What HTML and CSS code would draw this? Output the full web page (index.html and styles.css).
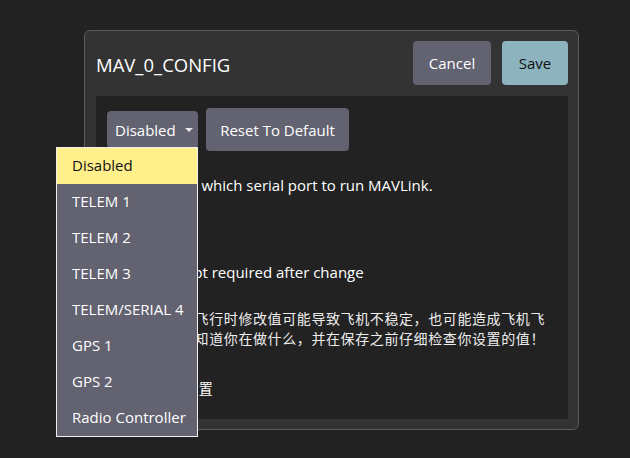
FILE: index.html
```html
<!DOCTYPE html>
<html>
<head>
<meta charset="utf-8">
<link rel="stylesheet" href="styles.css">
</head>
<body>
<div class="dialog">
  <div class="header">
    <div class="title">MAV_0_CONFIG</div>
    <button class="btn cancel">Cancel</button>
    <button class="btn save">Save</button>
  </div>
  <div class="content">
    <div class="row">
      <div class="combo"><span>Disabled</span><span class="arrow"></span></div>
      <button class="btn reset">Reset To Default</button>
    </div>
    <p class="line desc">Configure on which serial port to run MAVLink.</p>
    <p class="line reboot">Vehicle reboot required after change</p>
    <p class="line warn">警告：如果在飞行时修改值可能导致飞机不稳定，也可能造成飞机飞<br>飞丢。确保你知道你在做什么，并在保存之前仔细检查你设置的值！</p>
    <p class="line adv"><span class="check"></span>高级设置</p>
    <div class="menu">
      <div class="item active">Disabled</div>
      <div class="item">TELEM 1</div>
      <div class="item">TELEM 2</div>
      <div class="item">TELEM 3</div>
      <div class="item">TELEM/SERIAL 4</div>
      <div class="item">GPS 1</div>
      <div class="item">GPS 2</div>
      <div class="item">Radio Controller</div>
    </div>
  </div>
</div>
</body>
</html>
```
FILE: styles.css
```css
html, body {
  margin: 0;
  padding: 0;
  background: #222222;
  font-family: "Open Sans", "Noto Sans CJK SC", sans-serif;
  color: #ffffff;
}
body {
  width: 630px;
  height: 458px;
  overflow: hidden;
  padding-top: 30px;
  box-sizing: border-box;
}
.dialog {
  margin-left: 84px;
  width: 495px;
  height: 400px;
  box-sizing: border-box;
  border: 1px solid #5c5c5c;
  border-radius: 6px;
  background: #333333;
  padding: 10px 10px 10px 11px;
  display: flex;
  flex-direction: column;
  gap: 11px;
}
.header {
  display: flex;
  align-items: center;
  gap: 11px;
  height: 44px;
  flex: none;
}
.title {
  flex: 1;
  font-size: 18.5px;
  padding-top: 2px;
}
.btn {
  font-family: "Open Sans", sans-serif;
  border: none;
  border-radius: 4px;
  color: #ffffff;
  font-size: 15px;
  padding: 0;
  cursor: pointer;
}
.cancel {
  width: 78px;
  height: 44px;
  background: #626270;
}
.save {
  width: 66px;
  height: 44px;
  background: #8cb3be;
  color: #111111;
}
.content {
  flex: 1;
  background: #222222;
  position: relative;
  padding: 12px 11px;
}
.row {
  display: flex;
  align-items: center;
  gap: 8px;
}
.combo {
  width: 91px;
  height: 37px;
  box-sizing: border-box;
  background: #626270;
  border-radius: 4px;
  display: flex;
  align-items: center;
  padding-left: 8px;
  font-size: 15px;
  gap: 9px;
}
.arrow {
  width: 0;
  height: 0;
  border-left: 4px solid transparent;
  border-right: 4px solid transparent;
  border-top: 4px solid #e8e8e8;
}
.reset {
  width: 143px;
  height: 43px;
  background: #626270;
}
.line {
  margin: 0;
  font-size: 15px;
  line-height: 20px;
}
.desc { margin-top: 24px; }
.reboot { margin-top: 67px; }
.warn {
  margin-top: 26px;
  font-family: "Noto Sans CJK SC", sans-serif;
  font-size: 14px;
  letter-spacing: 0.6px;
  color: #eeeeee;
}
.adv {
  margin-top: 30px;
  font-family: "Noto Sans CJK SC", sans-serif;
  font-size: 14px;
  letter-spacing: 0.6px;
  display: flex;
  align-items: center;
  gap: 10px;
}
.check {
  width: 16px;
  height: 16px;
  border: 1px solid #888;
  margin-right: 20px;
}
.menu {
  position: absolute;
  left: -40px;
  top: 51px;
  width: 142px;
  box-sizing: border-box;
  border: 1px solid #f0f0f0;
  background: #626270;
}
.item {
  height: 36px;
  box-sizing: border-box;
  display: flex;
  align-items: center;
  padding-left: 15px;
  padding-bottom: 3px;
  font-size: 15px;
  color: #ffffff;
}
.item.active {
  background: #fff08c;
  color: #111111;
}
```
